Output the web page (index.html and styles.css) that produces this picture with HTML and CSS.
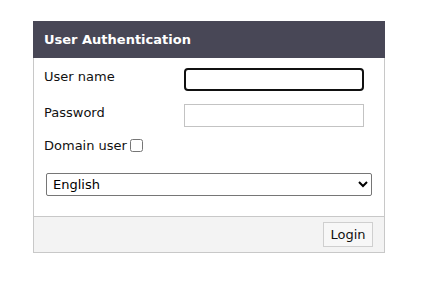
FILE: index.html
```html
<!DOCTYPE html>
<html>
<head>
<meta charset="utf-8">
<link rel="stylesheet" href="styles.css">
</head>
<body>
<div class="panel">
  <div class="panel-header">User Authentication</div>
  <div class="panel-body">
    <div class="row">
      <label class="label">User name</label>
      <input class="field field-focus" type="text">
    </div>
    <div class="row">
      <label class="label">Password</label>
      <input class="field" type="password">
    </div>
    <div class="domain-row">
      <span class="label">Domain user</span>
      <input class="check" type="checkbox">
    </div>
    <select class="lang">
      <option>English</option>
    </select>
  </div>
  <div class="panel-footer">
    <button class="login">Login</button>
  </div>
</div>
</body>
</html>
```

FILE: styles.css
```css
* { box-sizing: border-box; }
body {
  margin: 0;
  background: #ffffff;
  font-family: "DejaVu Sans", Verdana, sans-serif;
  font-size: 13px;
  color: #111;
}
.panel {
  margin: 21px 0 0 33px;
  width: 352px;
  border: 1px solid #c8c8c8;
  border-top: none;
}
.panel-header {
  height: 37px;
  background: #484756;
  color: #fff;
  font-weight: bold;
  font-size: 13px;
  display: flex;
  align-items: center;
  margin: 0 -1px;
  padding-left: 11px;
}
.panel-body {
  padding: 10px 12px 20px 10px;
}
.row {
  display: flex;
  align-items: flex-start;
  height: 23px;
  margin-bottom: 13px;
}
.row .label {
  width: 140px;
  line-height: 16px;
  margin-top: 1px;
}
.field {
  width: 180px;
  height: 23px;
  border: 1px solid #c3c3c3;
  background: #fff;
  margin: 0;
  padding: 0 4px;
  font: inherit;
}
.field-focus {
  border: 2px solid #111;
  border-radius: 4px;
}
.domain-row {
  display: flex;
  align-items: center;
  height: 18px;
  margin-top: -4px;
}
.check {
  width: 13px;
  height: 13px;
  margin: 0 0 0 3px;
}
.lang {
  display: block;
  margin: 19px 0 0 2px;
  width: 326px;
  height: 23px;
  font: inherit;
  color: #000;
  border: 1px solid #767676;
  border-radius: 2px;
  background: #fff;
  padding: 0 2px;
}
.panel-footer {
  border-top: 1px solid #c8c8c8;
  background: #f3f3f3;
  height: 36px;
  display: flex;
  justify-content: flex-end;
  align-items: flex-start;
  padding: 5px 11px 0 0;
}
.login {
  width: 50px;
  height: 25px;
  font: inherit;
  font-size: 13px;
  color: #111;
  background: #f7f7f7;
  border: 1px solid #cfcfcf;
  border-radius: 0;
  padding: 0;
}
```
